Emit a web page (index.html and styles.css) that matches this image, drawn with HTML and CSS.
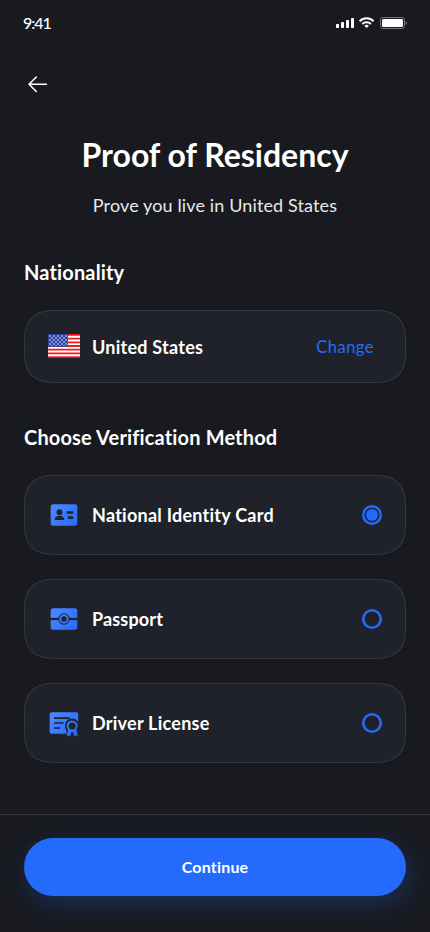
FILE: index.html
```html
<!DOCTYPE html>
<html lang="en">
<head>
<meta charset="utf-8">
<meta name="viewport" content="width=device-width, initial-scale=1">
<title>Proof of Residency</title>
<link rel="stylesheet" href="styles.css">
</head>
<body>
<div class="screen">
  <div class="status">
    <span class="time">9:41</span>
    <svg class="status-icons" width="72" height="14" viewBox="0 0 72 14" fill="#fff">
      <rect x="1" y="8" width="3" height="4" rx=".8"/><rect x="6" y="6" width="3" height="6" rx=".8"/><rect x="11" y="4" width="3" height="8" rx=".8"/><rect x="16" y="2" width="3" height="10" rx=".8"/>
      <g fill="none" stroke="#fff" stroke-width="2"><path d="M24.6 5.2a10 10 0 0 1 14 0"/><path d="M27.3 8a6.200 6.200 0 0 1 8.600 0"/></g>
      <path d="M29.300 9.700a3.500 3.500 0 0 1 4.600 0L31.600 12z"/>
      <rect x="45.500" y="1.500" width="24" height="11" rx="2.600" fill="none" stroke="#77787c"/>
      <rect x="47" y="3" width="21" height="8" rx="1.500"/>
      <path d="M70.700 5.200q1.300.4 1.300 1.800t-1.300 1.800z" fill="#77787c"/>
    </svg>
  </div>
  <button class="back" aria-label="Back">
    <svg width="28" height="28" viewBox="0 0 28 28" fill="none" stroke="#fff" stroke-width="1.600" stroke-linecap="round" stroke-linejoin="round"><path d="M22.300 14.300H5M12.300 7L5 14.300l7.300 7.200"/></svg>
  </button>
  <h1 class="title">Proof of Residency</h1>
  <p class="subtitle">Prove you live in United States</p>

  <h2 class="heading">Nationality</h2>
  <section class="card country">
    <svg class="icon flag" width="32" height="24" viewBox="0 4 32 24">
      <defs><pattern id="stars" width="4" height="4" patternUnits="userSpaceOnUse" x="1" y="5"><circle cx="1" cy="1" r=".75" fill="#fff"/><circle cx="3" cy="3" r=".75" fill="#fff"/></pattern></defs>
      <path fill="#fff" d="M0 4h32v24H0z"/>
      <path stroke="#f01820" stroke-width="1.850" d="M0 4.920h32M0 8.620h32M0 12.310h32M0 16h32M0 19.690h32M0 23.380h32M0 27.080h32"/>
      <path fill="#2c42a5" d="M0 4h20v12.900H0z"/><path fill="url(#stars)" d="M1 5h18.500v11H1z"/>
    </svg>
    <span class="label">United States</span>
    <a class="change">Change</a>
  </section>

  <h2 class="heading">Choose Verification Method</h2>
  <div class="options">
    <section class="card option">
      <svg class="icon" width="32" height="32" viewBox="0 0 32 32">
        <defs><linearGradient id="blue" gradientUnits="userSpaceOnUse" x1="30" y1="27" x2="2" y2="5"><stop stop-color="#246bfd"/><stop offset="1" stop-color="#5089ff"/></linearGradient></defs>
        <rect x="2.700" y="5.300" width="26.600" height="21.400" rx="2.600" fill="url(#blue)"/>
        <g fill="#1f222a"><circle cx="11.500" cy="13.200" r="2.900"/><path d="M6.500 21c.6-2.900 2.400-4.200 5-4.200s4.400 1.300 5 4.200zM18.700 12.200h6.600v2.600h-6.600zM20 17.300h5.300v2.600H20z"/></g>
      </svg>
      <span class="label">National Identity Card</span>
      <span class="radio checked"></span>
    </section>
    <section class="card option">
      <svg class="icon" width="32" height="32" viewBox="0 0 32 32">
        <rect x="2.700" y="5.300" width="26.600" height="21.400" rx="2.600" fill="url(#blue)"/>
        <path d="M2 16h28" stroke="#1f222a" stroke-width="2.200"/>
        <circle cx="16" cy="16" r="5.700" fill="#1f222a"/>
        <circle cx="16" cy="16" r="3.700" fill="none" stroke="url(#blue)" stroke-width="2"/>
      </svg>
      <span class="label passport">Passport</span>
      <span class="radio"></span>
    </section>
    <section class="card option">
      <svg class="icon" width="32" height="32" viewBox="0 0 32 32">
        <rect x="1.700" y="5.300" width="28.500" height="21.400" rx="2" fill="url(#blue)"/>
        <path d="M6 11.200h15.500M6 16h9.500M6 21h6" stroke="#1f222a" stroke-width="1.700"/>
        <path d="M17 19a7.100 7.100 0 0 1 14-2v11H18.500v-4.300A7 7 0 0 1 17 19z" fill="#1f222a"/>
        <path d="M20.300 22.300l-1.800 6.700 2-.5 1.400 1.200 1.400-4.500h1.800l1.500 4.500 1.400-1.200 1.700.5-1.400-6.700z" fill="url(#blue)"/>
        <circle cx="24.100" cy="19" r="4.500" fill="#1f222a" stroke="url(#blue)" stroke-width="2"/>
      </svg>
      <span class="label">Driver License</span>
      <span class="radio"></span>
    </section>
  </div>
  <footer class="footer"><button class="continue">Continue</button></footer>
</div>
</body>
</html>
```
FILE: styles.css
```css
* { box-sizing: border-box; }
body {
  margin: 0;
  background: #181a20;
  color: #fff;
  font-family: Lato, "Liberation Sans", sans-serif;
  font-variant-ligatures: none;
}
.screen { height: 932px; padding-top: 12px; display: flex; flex-direction: column; overflow: hidden; }
.status { display: flex; justify-content: space-between; align-items: center; height: 22px; padding: 0 23px; }
.time { font-size: 16px; font-weight: 500; line-height: 22px; letter-spacing: -1px; }
.back, .continue { border: 0; padding: 0; font-family: inherit; color: inherit; }
.back { background: none; width: 28px; height: 28px; margin: 36px 0 0 24px; }
.back svg { display: block; }
.title, .subtitle, .heading { margin: 0; white-space: nowrap; }
.title { margin-top: 38px; height: 38px; line-height: 38px; font-size: 32px; font-weight: 700; text-align: center; }
.subtitle { margin-top: 19px; height: 24px; line-height: 24px; font-size: 18px; font-weight: 400; color: #e9e9ea; letter-spacing: 0.13px; text-align: center; }
.heading { margin-top: 42px; padding-left: 24px; height: 24px; line-height: 24px; font-size: 20px; font-weight: 700; letter-spacing: 0.15px; }
.subtitle + .heading { margin-top: 43px; }
.card {
  display: flex;
  align-items: center;
  margin: 0 24px;
  padding: 0 23px;
  background: #1f222a;
  border: 1px solid #35383f;
  border-radius: 24px;
}
@supports (corner-shape: superellipse(1.4)) {
  .card { border-radius: 31px; corner-shape: superellipse(1.35); }
}
.country { height: 73px; margin-top: 26px; }
.option { height: 80px; }
.options { display: flex; flex-direction: column; gap: 24px; margin-top: 26px; }
.icon { flex: none; margin-right: 12px; }
.flag { margin-bottom: 2px; }
.label { flex: 1; font-size: 18px; line-height: 24px; font-weight: 700; letter-spacing: 0.25px; white-space: nowrap; }
.passport { letter-spacing: 0.15px; }
.change { color: #246bfd; font-size: 16.500px; line-height: 22px; font-weight: 400; letter-spacing: 0.5px; margin-right: 8px; }
.radio { width: 20px; height: 20px; border-radius: 50%; box-shadow: inset 0 0 0 2.5px #246bfd; display: grid; place-items: center; }
.checked::after { content: ""; width: 12px; height: 12px; border-radius: 50%; background: #246bfd; }
.footer { margin-top: auto; height: 118px; border-top: 1px solid #35383f; padding: 23px 24px 0; }
.continue {
  display: block;
  width: 100%;
  height: 58px;
  padding-bottom: 1px;
  border-radius: 29px;
  background: #246bfd;
  box-shadow: 4px 8px 24px rgba(36, 107, 253, 0.25);
  font-size: 16px;
  font-weight: 700;
  letter-spacing: 0.2px;
}
```
